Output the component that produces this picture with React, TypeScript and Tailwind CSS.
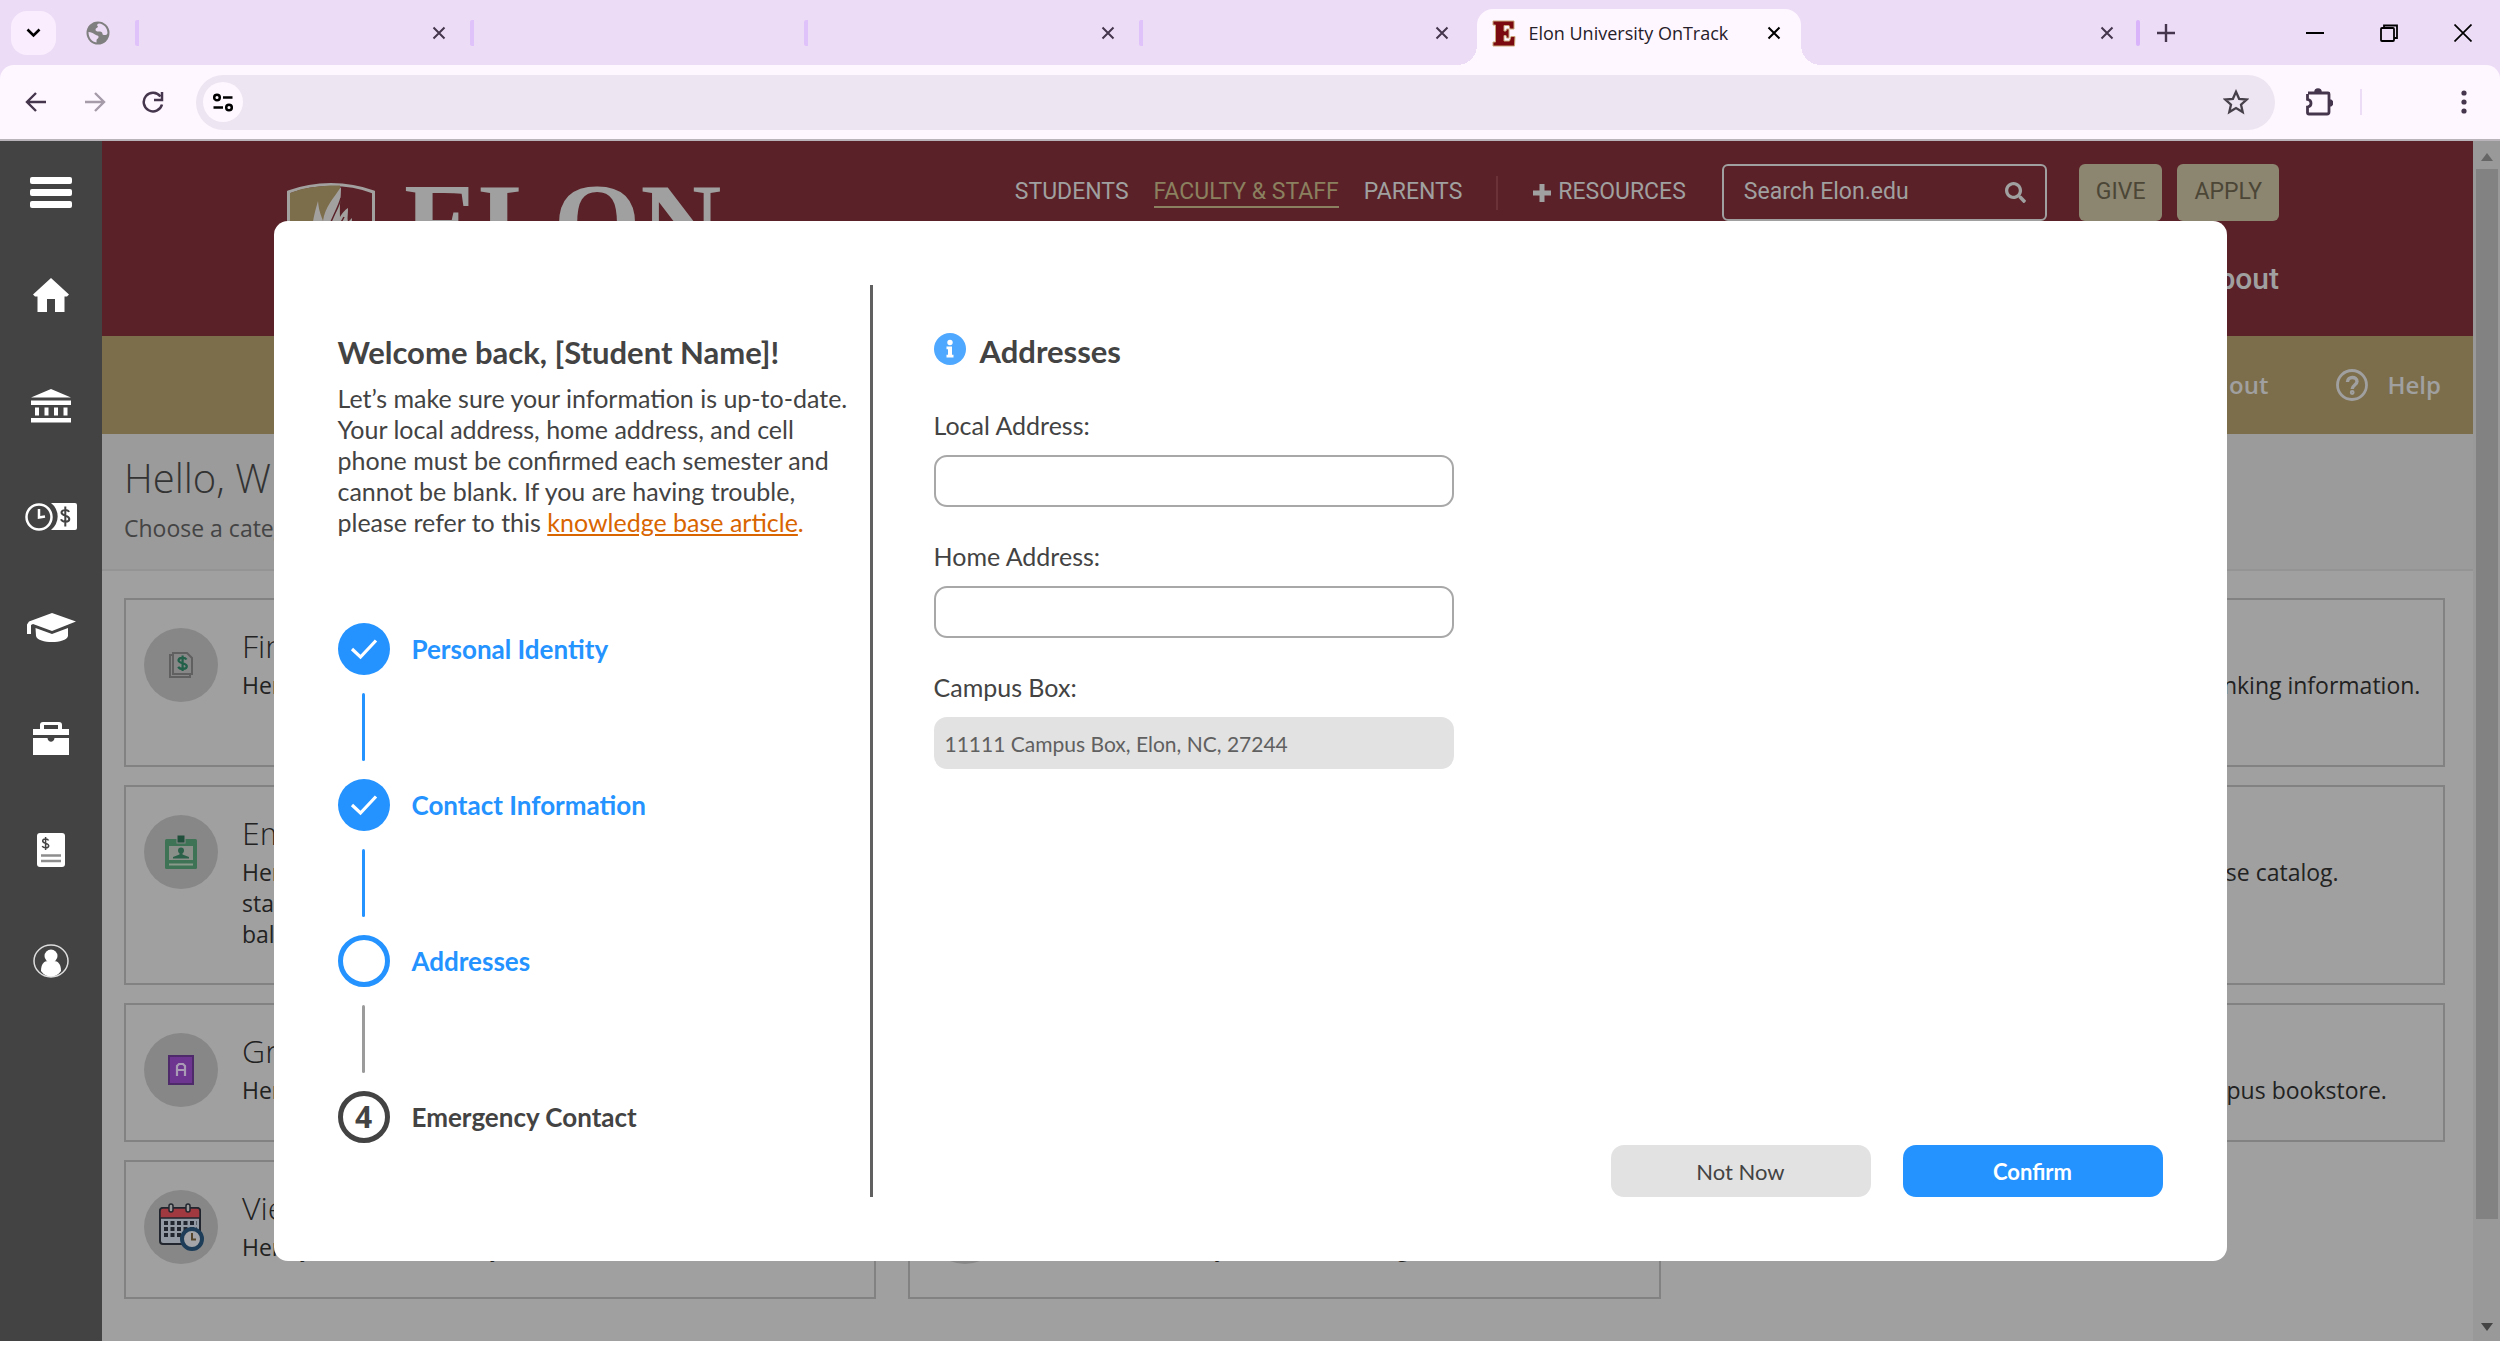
import React from "react";
import { FaSearch } from "react-icons/fa";

const TabClose = ({ dark = false }: { dark?: boolean }) => (
  <button type="button" aria-label="Close tab" className={dark ? "text-black" : "text-[#46364d]"}>
    <svg width="14" height="14" viewBox="0 0 14 14" fill="none" stroke="currentColor" strokeWidth="2">
      <path d="M1.5 1.5l11 11M12.500 1.500l-11 11" />
    </svg>
  </button>
);

const IdleTab = ({ close = true }: { close?: boolean }) => (
  <div className="flex h-[26px] min-w-0 flex-1 items-center justify-end rounded-xs border-l-4 border-[#e0c2fb] pr-6">
    {close && <TabClose />}
  </div>
);

function TabStrip() {
  return (
    <div className="flex h-[65px] items-center bg-[#eddcf6]">
      <button type="button" aria-label="Search tabs" className="ml-[11px] flex h-[44px] w-[45px] items-center justify-center rounded-2xl bg-[#faeefe]">
        <svg width="15" height="10" viewBox="0 0 15 10" fill="none" stroke="#000" strokeWidth="2.600">
          <path d="M1.500 1.500l6 6 6-6" />
        </svg>
      </button>
      <svg className="ml-[30px] mr-[25px]" width="24" height="24" viewBox="0 0 24 24">
        <circle cx="12" cy="12" r="11.500" fill="#7f7f7f" />
        <path d="M13 2.500c-2 .5-2.500 2-1 3 0 1.500-2.500 1.200-2.500 3 0 1.600 1.200 2 3 2 2.600 0 4 .6 4 2.600 0 1.200 1.700 1 3 1 1-.2 1.800-1 2-2.100C21.500 7 18 3 13 2.500z" fill="#eddcf6" />
        <path d="M2.500 11c2.600 0 4.500 1 6.500 2.500 1.500 1.200 3.600.6 3.600 2.600 0 1.700-2.100 1.600-2.100 3.300v2C6 21 2.500 17 2.500 11z" fill="#eddcf6" />
      </svg>
      <div className="flex min-w-0 flex-[4] items-center">
        <IdleTab />
        <IdleTab close={false} />
        <IdleTab />
        <IdleTab />
      </div>
      <div className="relative ml-1 flex h-[56px] w-[324px] items-center self-end rounded-t-[16px] bg-[#fef7ff] pb-2 pl-[15px] pr-5">
        <span className="absolute bottom-0 -left-5 size-5 bg-[radial-gradient(circle_at_0_0,transparent_20px,#fef7ff_20px)]" />
        <span className="absolute bottom-0 -right-5 size-5 bg-[radial-gradient(circle_at_100%_0,transparent_20px,#fef7ff_20px)]" />
        <svg width="24" height="27" viewBox="0 0 24 27">
          <path d="M1 1h21v8h-4l-1-3.500h-5V11h2l.5-2H17v9h-2.500l-.5-2.500h-2V21h5.500l1.500-4.500h4L22.500 26H1v-4h2.500V5H1z" fill="#7a0a0f" stroke="#c9a77a" strokeWidth="1" />
        </svg>
        <span className="ml-3 flex-1 whitespace-nowrap font-['Open_Sans',sans-serif] text-[18px] text-[#26202a]">Elon University OnTrack</span>
        <TabClose dark />
      </div>
      <div className="min-w-0 flex-1">
        <div className="flex justify-end pr-[22px]">
          <TabClose />
        </div>
      </div>
      <span className="h-[26px] w-1 rounded-xs bg-[#d9b4fb]" />
      <button type="button" aria-label="New tab" className="ml-[17px]">
        <svg width="18" height="18" viewBox="0 0 18 18" stroke="#46364d" strokeWidth="2.400">
          <path d="M9 0v18M0 9h18" />
        </svg>
      </button>
      <div className="ml-[131px] mr-7 flex items-center gap-[56px]">
        <button type="button" aria-label="Minimize">
          <svg width="18" height="18" viewBox="0 0 18 18" stroke="#000" strokeWidth="2"><path d="M0 9h18" /></svg>
        </button>
        <button type="button" aria-label="Restore">
          <svg width="18" height="18" viewBox="0 0 18 18" fill="none" stroke="#000" strokeWidth="1.800">
            <rect x="1" y="4" width="13" height="13" rx="1" />
            <path d="M4 4V1.500h13V14h-3" />
          </svg>
        </button>
        <button type="button" aria-label="Close window">
          <svg width="18" height="18" viewBox="0 0 18 18" stroke="#000" strokeWidth="1.700"><path d="M.5.5l17 17M17.500.5l-17 17" /></svg>
        </button>
      </div>
    </div>
  );
}

function Toolbar() {
  return (
    <div className="bg-[#eddcf6]">
      <div className="flex h-[76px] items-center rounded-t-[14px] border-b-2 border-[#b9b4ba] bg-[#fef7ff] pl-[25px] pr-[33px]">
        <button type="button" aria-label="Back">
          <svg width="22" height="20" viewBox="0 0 22 20" fill="none" stroke="#46364d" strokeWidth="2.400"><path d="M21 10H3M11 1l-9 9 9 9" /></svg>
        </button>
        <button type="button" aria-label="Forward" className="ml-[37px]">
          <svg width="22" height="20" viewBox="0 0 22 20" fill="none" stroke="#a59ba9" strokeWidth="2.400"><path d="M1 10h18M11 1l9 9-9 9" /></svg>
        </button>
        <button type="button" aria-label="Reload" className="ml-9">
          <svg width="22" height="22" viewBox="0 0 22 22" fill="none" stroke="#46364d" strokeWidth="2.500"><path d="M20 13.500A9.300 9.300 0 1 1 18.500 5.500" /><path d="M20 1v8h-8" /></svg>
        </button>
        <div className="ml-8 flex h-[55px] min-w-0 flex-1 items-center rounded-full bg-[#ede5f1] pl-[7px] pr-[26px]">
          <button type="button" aria-label="Site settings" className="flex size-[40px] items-center justify-center rounded-full bg-[#fef7ff]">
            <svg width="20" height="19" viewBox="0 0 20 19" fill="none" stroke="#000" strokeWidth="2.500">
              <circle cx="4" cy="4.500" r="2.800" />
              <path d="M10 4.500h9.500M.5 14.500h9.500" />
              <circle cx="16" cy="14.500" r="2.800" />
            </svg>
          </button>
          <input aria-label="Address and search bar" className="h-full min-w-0 flex-1 bg-transparent px-3 outline-none" />
          <button type="button" aria-label="Bookmark this tab">
            <svg width="26" height="26" viewBox="0 0 26 26" fill="none" stroke="#46404a" strokeWidth="2.300">
              <path d="M13 2.800l3.100 7 7.600.7-5.700 5.100 1.700 7.500-6.700-4-6.700 4L8 15.600l-5.700-5.100 7.600-.7z" />
            </svg>
          </button>
        </div>
        <button type="button" aria-label="Extensions" className="ml-[30px]">
          <svg width="28" height="28" viewBox="0 0 28 28" fill="none" stroke="#46364d" strokeWidth="2.800">
            <path d="M3 5h20a1 1 0 0 1 1 1v18a2 2 0 0 1-2 2H4a1.500 1.500 0 0 1-1.500-1.500V19c2.500-.5 3.500-1.800 3.500-3.800s-1-3.400-3.500-3.900V6" />
            <path d="M10 4a3 3 0 0 1 6 0zM24.500 12a2.500 2.500 0 0 1 0 6z" fill="#46364d" strokeWidth="1.500" />
          </svg>
        </button>
        <span className="ml-[27px] mr-[99px] h-[26px] w-0.5 bg-[#eddcf6]" />
        <button type="button" aria-label="Menu">
          <svg width="6" height="24" viewBox="0 0 6 24" fill="#46364d"><circle cx="3" cy="3" r="2.600" /><circle cx="3" cy="12" r="2.600" /><circle cx="3" cy="21" r="2.600" /></svg>
        </button>
      </div>
    </div>
  );
}

const SIDE_ICONS: { label: string; icon: React.ReactNode }[] = [
  {
    label: "Home",
    icon: (
      <svg width="36" height="34" viewBox="0 0 36 34" fill="#fff"><path d="M18 0l18 16.500-2 2h-2.500V34H22V21h-8v13H4.500V18.500H2l-2-2z" /></svg>
    ),
  },
  {
    label: "Finances",
    icon: (
      <svg width="42" height="34" viewBox="0 0 42 34" fill="#fff">
        <path d="M21 0l20 8.500H1zM1 11.500h40V16H1zM5 18.500h4v8H5zM14.500 18.500h4v8h-4zM24 18.500h4v8h-4zM33.500 18.500h4v8h-4zM1 29h40v4.500H1z" />
      </svg>
    ),
  },
  {
    label: "Time and pay",
    icon: (
      <svg width="52" height="30" viewBox="0 0 52 30">
        <path d="M26 1h24a2 2 0 0 1 2 2v23a2 2 0 0 1-2 2H26a17 17 0 0 0 0-27z" fill="#fff" />
        <circle cx="14" cy="15" r="12.500" fill="none" stroke="#fff" strokeWidth="2.500" />
        <path d="M14 7v8.500l6-1" fill="none" stroke="#fff" strokeWidth="2.500" />
        <path d="M44 10c-1-2.500-7.500-2.700-7.500.6 0 3.600 7.800 2.400 7.800 6.300 0 3.800-7.300 3.500-8.300.4M40.300 4.500v20" fill="none" stroke="#434343" strokeWidth="2" />
      </svg>
    ),
  },
  {
    label: "Academics",
    icon: (
      <svg width="50" height="30" viewBox="0 0 50 30" fill="#fff">
        <path d="M26 0l24 8.500L26 18 7 11l-2 1v9H1v-9.500L3 8.500z" />
        <path d="M9.500 15L26 21l16-6v8c-2 8-30 8-32 0z" />
      </svg>
    ),
  },
  {
    label: "Employment",
    icon: (
      <svg width="38" height="34" viewBox="0 0 38 34" fill="#fff">
        <path d="M8 7V3a3 3 0 0 1 3-3h16a3 3 0 0 1 3 3v4h7v6H1V7zm4-4v4h14V3z" fillRule="evenodd" />
        <path d="M1 16h14.500c.5 5 6.500 5 7 0H37v17H1z" />
      </svg>
    ),
  },
  {
    label: "Billing",
    icon: (
      <svg width="28" height="34" viewBox="0 0 28 34">
        <rect width="28" height="34" rx="3" fill="#fff" />
        <path d="M11.500 7.500c-.8-2-5.800-2-5.800.6 0 2.800 6 1.800 6 4.700 0 2.800-5.600 2.600-6.400.3M8.600 4v13" fill="none" stroke="#434343" strokeWidth="1.500" />
        <path d="M4 22.500h20M4 28h20" stroke="#8d8d8d" strokeWidth="2.500" />
      </svg>
    ),
  },
  {
    label: "Profile",
    icon: (
      <svg width="36" height="34" viewBox="0 0 36 34">
        <ellipse cx="18" cy="17" rx="17" ry="16" fill="none" stroke="#ddd" strokeWidth="1.500" />
        <circle cx="18" cy="12" r="6.500" fill="#fff" />
        <path d="M8 27c0-7 3-10 7-10h6c4 0 7 3 7 10-5 7.500-15 7.500-20 0z" fill="#fff" />
      </svg>
    ),
  },
];

function Sidebar() {
  return (
    <nav aria-label="Sections" className="flex w-[102px] flex-col items-center bg-[#434343] pt-[27px]">
      <button type="button" aria-label="Menu" className="flex h-12 flex-col items-center justify-center gap-[5px]">
        <span className="h-[7px] w-[42px] rounded-xs bg-white" />
        <span className="h-[7px] w-[42px] rounded-xs bg-white" />
        <span className="h-[7px] w-[42px] rounded-xs bg-white" />
      </button>
      <div className="mt-[55px] flex flex-col gap-[63px]">
        {SIDE_ICONS.map((item) => (
          <a key={item.label} href="#" aria-label={item.label} className="flex h-12 items-center justify-center">
            {item.icon}
          </a>
        ))}
      </div>
    </nav>
  );
}

function Header() {
  return (
    <header className="flex h-[195px] justify-between overflow-hidden bg-[#5a2228] pl-[185px] pr-[194px] pt-[23px] font-['Roboto',sans-serif] text-[23px] text-[#a0a0a0]">
      <div className="flex gap-[29px] pt-[19px]">
        <svg width="88" height="108" viewBox="0 0 88 108">
          <path d="M1.500 9C28-1 60-1 86.500 9v60c0 20-22 32-42.500 38C23.500 101 1.500 89 1.500 69z" fill="#5a2228" stroke="#a3a0a0" strokeWidth="3" />
          <path d="M3 10C18 4 38 2 53 2.500V105l-9 2C24 101 3 89 3 69z" fill="#7d6e4b" />
          <path d="M38 80C20 62 24 42 31 18c1 12 4 16 5 20C38 24 46 16 54 4c0 14-2 20-1 30 3-5 5-7 8-9 0 8-1 10 0 14l4-4c0 18-4 30-16 45z" fill="#a3a0a0" />
          <path d="M38 60c4-24 12-30 16-45M45 60c2-12 8-18 12-26" fill="none" stroke="#5a2228" strokeWidth="1.500" />
        </svg>
        <span className="font-['Liberation_Serif',serif] text-[112px] leading-[80px] font-bold">ELON</span>
      </div>
      <div className="flex flex-col items-end">
        <div className="flex h-[57px] items-center whitespace-nowrap">
          <a href="#">STUDENTS</a>
          <a href="#" className="ml-[25px] border-b-2 border-[#8b805f] text-[#8b805f] leading-[28px]">FACULTY &amp; STAFF</a>
          <a href="#" className="ml-[25px]">PARENTS</a>
          <span className="mx-[34px] h-[34px] w-0.5 bg-[#6b3338]" />
          <a href="#" className="flex items-center gap-1.5">
            <svg width="20" height="20" viewBox="0 0 20 20" fill="currentColor"><path d="M7.500 1h5v6.500H19v5h-6.500V19h-5v-6.500H1v-5h6.500z" /></svg>
            RESOURCES
          </a>
          <div className="ml-9 flex h-[57px] w-[325px] items-center justify-between rounded-md border-2 border-[#a0a0a0] pl-5 pr-[19px]">
            <input aria-label="Search Elon.edu" placeholder="Search Elon.edu" className="w-[220px] bg-transparent outline-none placeholder:text-[#a0a0a0]" />
            <FaSearch size={21} />
          </div>
          <button type="button" className="ml-8 h-[57px] rounded-md bg-[#8c8570] px-[17px] text-[#4b4636]">GIVE</button>
          <button type="button" className="ml-[15px] h-[57px] rounded-md bg-[#8c8570] px-[17px] text-[#4b4636]">APPLY</button>
        </div>
        <a href="#" className="mt-[38px] text-[30px] leading-[40px] font-medium">About</a>
      </div>
    </header>
  );
}

const CoinIcon = () => (
  <svg width="26" height="28" viewBox="0 0 26 28" fill="none">
    <path d="M5 4H2v22h20v-3" stroke="#606060" strokeWidth="2" />
    <path d="M5 2h14l5 5v16H5z" stroke="#606060" strokeWidth="2" />
    <path d="M18.500 8.500c-1.500-2.500-8-2.200-8 .8 0 3.600 8.300 2.300 8.300 6 0 3.300-7 3.400-8.600.6M14.600 4.500v15.500" stroke="#22604a" strokeWidth="2.200" />
  </svg>
);
const BadgeIcon = () => (
  <svg width="32" height="34" viewBox="0 0 32 34">
    <rect y="4" width="32" height="30" rx="1.500" fill="#3f7356" />
    <rect x="4" y="11" width="24" height="14" fill="#8a8f8a" />
    <rect x="12" width="8" height="8" fill="#204f3c" stroke="#878787" />
    <circle cx="16" cy="15.500" r="3" fill="#2c6149" />
    <path d="M14.500 17h3v2.500L24 22v1.500H8V22l6.500-2.500z" fill="#2c6149" />
    <path d="M4 29.500h24" stroke="#8a9a8a" strokeWidth="2" />
  </svg>
);
const GradeIcon = () => (
  <svg width="26" height="30" viewBox="0 0 26 30" fill="none">
    <rect x="1" y="1" width="24" height="28" fill="#6d3590" stroke="#4f2a6b" strokeWidth="2" />
    <path d="M9 21V11l2-2h4l2 2v10M9 15h8" stroke="#a99bb5" strokeWidth="2.200" />
  </svg>
);
const CalendarIcon = () => (
  <svg width="46" height="48" viewBox="0 0 46 48">
    <rect x="2" y="5" width="40" height="36" rx="3" fill="#939aa3" stroke="#22262e" strokeWidth="2" />
    <path d="M2 15V8a3 3 0 0 1 3-3h34a3 3 0 0 1 3 3v7z" fill="#a03a40" stroke="#22262e" strokeWidth="1.500" />
    <rect x="11" y="1" width="4" height="8" rx="2" fill="#999" stroke="#22262e" strokeWidth="1.500" />
    <rect x="28" y="1" width="4" height="8" rx="2" fill="#999" stroke="#22262e" strokeWidth="1.500" />
    <path d="M6 20h33M6 26h33M6 32h20" stroke="#22262e" strokeWidth="4" strokeDasharray="4 2.500" />
    <circle cx="34" cy="36" r="10" fill="#a3a5a8" stroke="#1d3d58" strokeWidth="4" />
    <path d="M34 30v6.500h4" fill="none" stroke="#55462c" strokeWidth="2" />
  </svg>
);

type Card = { title: string; text: string; icon?: React.ReactNode };
const CARDS: Card[] = [
  { title: "Finances", text: "Here you can view your finances.", icon: <CoinIcon /> },
  { title: "Financial Aid", text: "Here you can access your financial aid data, forms and all other award details." },
  { title: "Banking", text: "Here you can view and update your banking information." },
  { title: "Employee", text: "Here you can view your tax forms and earning statements, banking information, employee leave balances and more.", icon: <BadgeIcon /> },
  { title: "Planning", text: "Here you can search for courses and plan your terms." },
  { title: "Catalog", text: "Here you can view and search the course catalog." },
  { title: "Grades", text: "Here you can view your grades by term.", icon: <GradeIcon /> },
  { title: "Enrollment", text: "Here you can view an enrollment request." },
  { title: "Bookstore", text: "Here you can order texts from the campus bookstore." },
  { title: "View Calendar", text: "Here you can view every event and class.", icon: <CalendarIcon /> },
  { title: "Support", text: "All room dates, my hall and housing info" },
];

function Dashboard() {
  return (
    <main className="flex-1 bg-[#a0a0a0] font-['Open_Sans',sans-serif] text-[#222]">
      <div className="flex h-[98px] items-center justify-end bg-[#7d6e4b] pr-8 text-[24px] font-semibold text-[#a0a0a0]">
        <a href="#">Sign out</a>
        <a href="#" className="ml-[67px] flex items-center gap-5">
          <svg width="32" height="32" viewBox="0 0 32 32" fill="none" stroke="currentColor" strokeWidth="2.800">
            <circle cx="16" cy="16" r="14.500" />
            <path d="M11.500 13c0-6 9.500-6 9.500-.5 0 3.500-4.800 3.500-4.800 7.500" strokeWidth="3.400" />
            <circle cx="16.200" cy="23.500" r="1" />
          </svg>
          Help
        </a>
      </div>
      <div className="h-[137px] border-b-2 border-[#949494] bg-[#9b9b9b] pl-[22px] pt-5">
        <h1 className="text-[40px] leading-[48px] font-light text-[#333]">Hello, W</h1>
        <p className="mt-2.5 text-[23px] leading-[32px] text-[#444]">Choose a category</p>
      </div>
      <div className="grid grid-cols-3 gap-x-8 gap-y-[18px] pb-8 pl-[22px] pr-7 pt-[27px]">
        {CARDS.map((c) => (
          <section key={c.title} className="flex gap-6 border-2 border-[#828282] pb-[33px] pl-[18px] pr-5 pt-7">
            <div className="flex size-[74px] shrink-0 items-center justify-center rounded-full bg-[#878787]">{c.icon}</div>
            <div>
              <h2 className="text-[32px] leading-[36px] font-light">{c.title}</h2>
              <p className="mt-1.5 text-[23px] leading-[31px]">{c.text}</p>
            </div>
          </section>
        ))}
      </div>
    </main>
  );
}

function Scrollbar() {
  return (
    <div aria-hidden="true" className="flex w-[27px] flex-col items-center bg-[#999] py-2.5">
      <svg width="12" height="8" viewBox="0 0 12 8" className="mb-2 mt-0.5" fill="#666"><path d="M6 0l6 8H0z" /></svg>
      <div className="w-[22px] flex-[1050] bg-[#828282]" />
      <div className="flex-[104]" />
      <svg width="12" height="8" viewBox="0 0 12 8" fill="#444"><path d="M6 8l6-8H0z" /></svg>
    </div>
  );
}

type Status = "done" | "current" | "todo";
const STEPS: { label: string; status: Status; n: number }[] = [
  { label: "Personal Identity", status: "done", n: 1 },
  { label: "Contact Information", status: "done", n: 2 },
  { label: "Addresses", status: "current", n: 3 },
  { label: "Emergency Contact", status: "todo", n: 4 },
];

function Stepper() {
  return (
    <ol className="mt-[85px] flex flex-col gap-[18px]">
      {STEPS.map((s) => (
        <li key={s.n} className="flex flex-col gap-[18px]">
          <div className={`flex items-center gap-[22px] text-[26px] font-bold ${s.status === "todo" ? "text-[#434343]" : "text-[#2493ff]"}`}>
            {s.status === "done" && (
              <span className="flex size-[52px] items-center justify-center rounded-full bg-[#2493ff]">
                <svg width="28" height="22" viewBox="0 0 28 22" fill="none" stroke="#fff" strokeWidth="3.200"><path d="M2 11l8.500 8L26 2.500" /></svg>
              </span>
            )}
            {s.status === "current" && <span className="size-[52px] rounded-full border-[5px] border-[#2493ff]" />}
            {s.status === "todo" && (
              <span className="flex size-[52px] items-center justify-center rounded-full border-[5px] border-[#434343] font-['Open_Sans',sans-serif] text-[30px] leading-none">{s.n}</span>
            )}
            {s.label}
          </div>
          {s.status !== "todo" && (
            <span className={`ml-6 h-[68px] w-[3px] rounded-full ${s.status === "done" ? "bg-[#2493ff]" : "bg-[#9b9b9b]"}`} />
          )}
        </li>
      ))}
    </ol>
  );
}

const FIELDS = [
  { id: "local", label: "Local Address:" },
  { id: "home", label: "Home Address:" },
  { id: "campus", label: "Campus Box:", value: "11111 Campus Box, Elon, NC, 27244" },
];

function ConfirmDialog() {
  return (
    <div className="absolute inset-0 flex items-center justify-center">
      <div role="dialog" aria-label="Confirm your information" className="flex w-[90%] max-w-[1953px] rounded-[14px] bg-white p-16 font-['Lato',sans-serif] text-[25px] text-[#434343]">
        <div className="w-[535px] shrink-0 border-r-[3px] border-[#606060] pb-[54px] pt-[49px]">
          <h2 className="text-[31px] leading-[36px] font-bold">Welcome back, [Student Name]!</h2>
          <p className="mt-[13px] leading-[31px]">
            Let’s make sure your information is up-to-date.<br />
            Your local address, home address, and cell<br />
            phone must be confirmed each semester and<br />
            cannot be blank. If you are having trouble,<br />
            please refer to this <a href="#" className="text-[#d96500] underline">knowledge base article</a><span className="text-[#d96500]">.</span>
          </p>
          <Stepper />
        </div>
        <form className="flex flex-1 flex-col pl-[61px] pt-12" onSubmit={(e) => e.preventDefault()}>
          <h3 className="flex items-start gap-[14px] text-[31px] leading-[36px] font-bold">
            <svg width="32" height="32" viewBox="0 0 32 32">
              <circle cx="16" cy="16" r="16" fill="#4fa8ff" />
              <circle cx="16" cy="9.500" r="2.700" fill="#fff" />
              <path d="M12.500 13.500h5.500v8.300h1.500v2.700h-7v-2.700H14V16.200h-1.500z" fill="#fff" />
            </svg>
            Addresses
          </h3>
          <div className="mt-[41px] flex flex-col gap-[34px]">
            {FIELDS.map((f) => (
              <div key={f.id} className="flex flex-col gap-[14px]">
                <label htmlFor={f.id} className="leading-[31px]">{f.label}</label>
                {f.value ? (
                  <input id={f.id} readOnly defaultValue={f.value} className="h-[52px] w-[520px] rounded-[13px] bg-[#e2e2e2] px-[11px] text-[21px] text-[#606060]" />
                ) : (
                  <input id={f.id} className="h-[52px] w-[520px] rounded-[13px] border-2 border-[#a8a8a8] px-[11px] text-[21px]" />
                )}
              </div>
            ))}
          </div>
          <div className="mt-auto flex justify-end gap-8 text-[22px]">
            <button type="button" className="h-[52px] w-[260px] rounded-[13px] bg-[#e2e2e2]">Not Now</button>
            <button type="submit" className="h-[52px] w-[260px] rounded-[13px] bg-[#2493ff] font-bold text-white">Confirm</button>
          </div>
        </form>
      </div>
    </div>
  );
}

export default function App() {
  return (
    <div className="flex min-h-screen flex-col bg-white pb-[13px]">
      <TabStrip />
      <Toolbar />
      <div className="relative flex flex-1">
        <Sidebar />
        <div className="flex min-w-0 flex-1 flex-col">
          <Header />
          <Dashboard />
        </div>
        <Scrollbar />
        <ConfirmDialog />
      </div>
    </div>
  );
}
